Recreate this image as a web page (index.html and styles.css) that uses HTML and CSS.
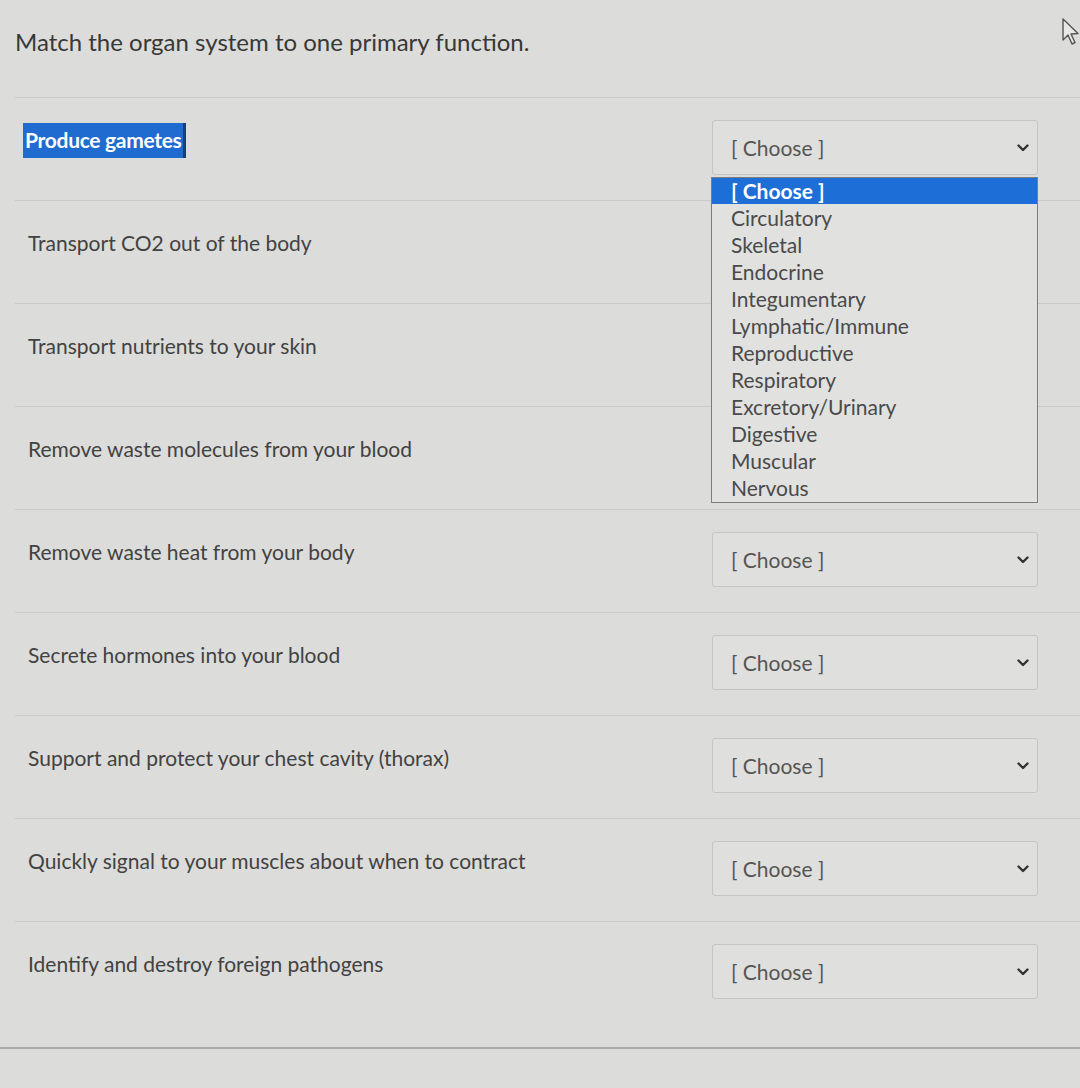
FILE: index.html
```html
<!DOCTYPE html>
<html>
<head>
<meta charset="utf-8">
<link rel="stylesheet" href="styles.css">
</head>
<body>
<div class="page">
  <h1 class="title">Match the organ system to one primary function.</h1>
  <div class="rows">
    <div class="row">
      <div class="label"><span class="sel">Produce gametes</span></div>
      <div class="select open">
        <span class="val">[ Choose ]</span>
        <svg class="chev" width="12" height="8" viewBox="0 0 12 8"><polyline points="1.5,1.5 6,6 10.5,1.5" fill="none" stroke="#333" stroke-width="2.4" stroke-linecap="round" stroke-linejoin="round"/></svg>
        <ul class="options">
          <li class="active">[ Choose ]</li>
          <li>Circulatory</li>
          <li>Skeletal</li>
          <li>Endocrine</li>
          <li>Integumentary</li>
          <li>Lymphatic/Immune</li>
          <li>Reproductive</li>
          <li>Respiratory</li>
          <li>Excretory/Urinary</li>
          <li>Digestive</li>
          <li>Muscular</li>
          <li>Nervous</li>
        </ul>
      </div>
    </div>
    <div class="row">
      <div class="label">Transport CO2 out of the body</div>
    </div>
    <div class="row">
      <div class="label">Transport nutrients to your skin</div>
    </div>
    <div class="row">
      <div class="label">Remove waste molecules from your blood</div>
    </div>
    <div class="row">
      <div class="label">Remove waste heat from your body</div>
      <div class="select"><span class="val">[ Choose ]</span><svg class="chev" width="12" height="8" viewBox="0 0 12 8"><polyline points="1.5,1.5 6,6 10.5,1.5" fill="none" stroke="#333" stroke-width="2.4" stroke-linecap="round" stroke-linejoin="round"/></svg></div>
    </div>
    <div class="row">
      <div class="label">Secrete hormones into your blood</div>
      <div class="select"><span class="val">[ Choose ]</span><svg class="chev" width="12" height="8" viewBox="0 0 12 8"><polyline points="1.5,1.5 6,6 10.5,1.5" fill="none" stroke="#333" stroke-width="2.4" stroke-linecap="round" stroke-linejoin="round"/></svg></div>
    </div>
    <div class="row">
      <div class="label">Support and protect your chest cavity (thorax)</div>
      <div class="select"><span class="val">[ Choose ]</span><svg class="chev" width="12" height="8" viewBox="0 0 12 8"><polyline points="1.5,1.5 6,6 10.5,1.5" fill="none" stroke="#333" stroke-width="2.4" stroke-linecap="round" stroke-linejoin="round"/></svg></div>
    </div>
    <div class="row">
      <div class="label">Quickly signal to your muscles about when to contract</div>
      <div class="select"><span class="val">[ Choose ]</span><svg class="chev" width="12" height="8" viewBox="0 0 12 8"><polyline points="1.5,1.5 6,6 10.5,1.5" fill="none" stroke="#333" stroke-width="2.4" stroke-linecap="round" stroke-linejoin="round"/></svg></div>
    </div>
    <div class="row">
      <div class="label">Identify and destroy foreign pathogens</div>
      <div class="select"><span class="val">[ Choose ]</span><svg class="chev" width="12" height="8" viewBox="0 0 12 8"><polyline points="1.5,1.5 6,6 10.5,1.5" fill="none" stroke="#333" stroke-width="2.4" stroke-linecap="round" stroke-linejoin="round"/></svg></div>
    </div>
  </div>
  <div class="footer-line"></div>
  <svg class="cursor" width="22" height="30" viewBox="0 0 22 30"><path d="M2 2 L2 23 L7 18 L11 27 L14 25.5 L10 17 L17 16.5 Z" fill="#e8e8e6" stroke="#555" stroke-width="1.4" stroke-linejoin="round"/></svg>
</div>
</body>
</html>
```
FILE: styles.css
```css
html, body {
  margin: 0;
  padding: 0;
}
body {
  background: #dcdcda;
  font-family: Lato, "Open Sans", sans-serif;
  color: #3e3e3e;
}
.page {
  position: relative;
  width: 1080px;
  height: 1088px;
  overflow: hidden;
}
.title {
  margin: 0;
  padding: 27px 0 0 15px;
  font-size: 24px;
  line-height: 30px;
  font-weight: 400;
  color: #383838;
}
.rows {
  margin: 40px 0 0 15px;
}
.row {
  display: flex;
  height: 102px;
  border-top: 1px solid #c9c9c7;
}
.label {
  flex: 1;
  padding: 28px 0 0 13px;
  font-size: 21px;
  line-height: 28px;
  color: #424242;
}
.sel {
  display: inline-block;
  margin-left: -5px;
  margin-top: -4px;
  padding: 3px 1px 4px 2px;
  background: #1f6bd0;
  color: #fff;
  font-weight: 700;
  letter-spacing: -0.3px;
  border-right: 3px solid #183f78;
}
.select {
  position: relative;
  box-sizing: border-box;
  width: 326px;
  height: 55px;
  margin: 22px 42px 0 0;
  padding: 0 8px 0 18px;
  border: 1px solid #c5c5c3;
  border-radius: 3px;
  background: #dfdfdd;
  display: flex;
  align-items: center;
  justify-content: space-between;
}
.val {
  font-size: 21px;
  color: #555;
}
.chev {
  display: block;
}
.options {
  position: absolute;
  top: 56px;
  left: -2px;
  width: 327px;
  box-sizing: border-box;
  margin: 0;
  padding: 0 0 1px;
  list-style: none;
  background: #e1e1df;
  border: 1px solid #7c7c7c;
  z-index: 2;
}
.options li {
  height: 27px;
  line-height: 27px;
  padding-left: 19px;
  font-size: 21px;
  color: #4a4a4a;
}
.options li.active {
  background: #1e6ed8;
  color: #fff;
  font-weight: 700;
  height: 26px;
  line-height: 26px;
}
.footer-line {
  margin-top: 23px;
  height: 2px;
  background: #a9a9a7;
}
.cursor {
  position: absolute;
  top: 17px;
  left: 1061px;
}
```
